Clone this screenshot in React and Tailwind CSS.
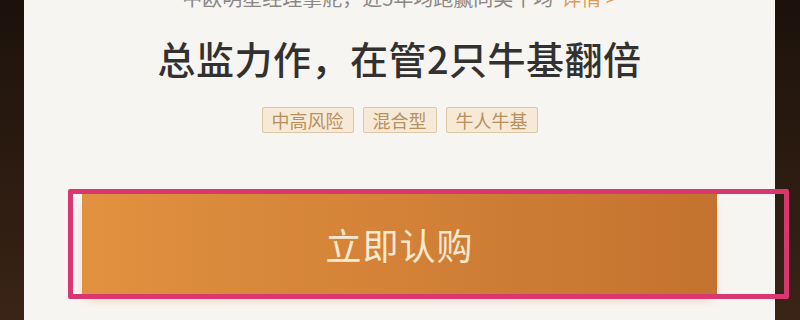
import React from "react";

const tags = ["中高风险", "混合型", "牛人牛基"];

const App = () => {
  return (
    <div
      className="relative flex h-[320px] w-[800px] overflow-hidden bg-[#24160e]"
      style={{ fontFamily: '"Noto Sans CJK SC", "Noto Sans", sans-serif' }}
    >
      {/* dark side strips */}
      <div className="w-[24px] shrink-0 bg-gradient-to-b from-[#1c120b] to-[#3a2416]" />

      {/* card */}
      <div className="flex w-[751px] shrink-0 flex-col items-center bg-[#f7f5f2]">
        <p className="-mt-[12px] h-[20px] text-[20px] leading-[20px] text-[#8a8784]">
          中欧明星经理掌舵，近5年均跑赢同类平均
          <span className="ml-2 text-[#e29a55]">详情 &gt;</span>
        </p>

        <h1 className="mt-[30px] text-[38px] font-medium leading-[40px] tracking-[0.5px] text-[#333130]">
          总监力作，在管2只牛基翻倍
        </h1>

        <div className="mt-[29px] flex gap-[9px]">
          {tags.map((t) => (
            <span
              key={t}
              className="rounded-[2px] border border-[#dcc7a6] bg-[#f6ead7] px-[9px] text-[18px] leading-[24px] text-[#b88f5e]"
            >
              {t}
            </span>
          ))}
        </div>

        <button className="mt-[61px] flex h-[100px] w-[635px] items-center justify-center bg-gradient-to-r from-[#e1913f] to-[#c4722f] text-[36px] tracking-[1px] text-[#fbe9d2] shadow-[0_8px_10px_-4px_rgba(230,140,60,0.45)]">
          立即认购
        </button>
      </div>

      <div className="w-[25px] shrink-0 bg-gradient-to-b from-[#1c120b] to-[#3a2416]" />

      {/* annotation box over the button */}
      <div className="absolute left-[68px] top-[189px] h-[110px] w-[721px] rounded-[2px] border-[5px] border-[#d8376f]" />
    </div>
  );
};

export default App;
